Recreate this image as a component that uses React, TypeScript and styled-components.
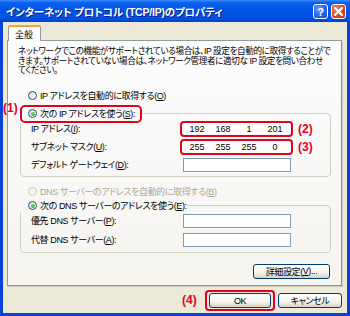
import React from 'react'
import styled, { createGlobalStyle, css } from 'styled-components'

const RED = '#e5001c'

const GlobalStyle = createGlobalStyle`
  html, body {
    margin: 0;
    padding: 0;
    background: #ece9d8;
  }
  body {
    font-family: 'Liberation Sans', 'Noto Sans CJK JP', sans-serif;
    font-size: 9px;
    letter-spacing: -0.4px;
    color: #000;
    font-feature-settings: 'palt';
  }
`

const Window = styled.div`
  width: 350px;
  height: 316px;
  display: flex;
  flex-direction: column;
  overflow: hidden;
`

const TitleBar = styled.div`
  height: 22px;
  flex: none;
  display: flex;
  align-items: center;
  padding: 0 4px 0 6px;
  background: linear-gradient(
    180deg,
    #3d8dff 0%,
    #0b61ee 12%,
    #0055e5 45%,
    #0052e2 80%,
    #003fd4 100%
  );
`

const TitleText = styled.div`
  flex: 1;
  color: #fff;
  font-weight: bold;
  font-size: 10.5px;
  letter-spacing: -0.2px;
  text-shadow: 1px 1px 0 #0a1a8a;
  white-space: nowrap;
`

const CaptionButtons = styled.div`
  display: flex;
  gap: 3px;
  margin-top: 1px;
`

const CaptionButton = styled.div<{ $close?: boolean }>`
  width: 13px;
  height: 13px;
  border: 1px solid #fff;
  border-radius: 3px;
  display: flex;
  align-items: center;
  justify-content: center;
  color: #fff;
  font-weight: bold;
  font-size: 11px;
  background: ${(p) =>
    p.$close
      ? 'radial-gradient(circle at 35% 30%, #f08a66 0%, #dc4a22 55%, #c03512 100%)'
      : 'radial-gradient(circle at 35% 30%, #5d9cff 0%, #2865e8 55%, #1a4ed0 100%)'};
`

const Client = styled.div`
  flex: 1;
  display: flex;
  flex-direction: column;
  background: #ece9d8;
  border: 3px solid #0842d6;
  border-top: 0;
  min-height: 0;
`

const TabStrip = styled.div`
  display: flex;
  padding: 3px 0 0 5px;
  height: 16px;
`

const Tab = styled.div`
  position: relative;
  z-index: 1;
  width: 33px;
  height: 16px;
  box-sizing: border-box;
  border: 1px solid #919b9c;
  border-top: 2px solid #f3a035;
  border-bottom: 0;
  border-radius: 2px 2px 0 0;
  background: #fcfcfe;
  display: flex;
  align-items: center;
  padding-left: 6px;
  letter-spacing: 0;
`

const Panel = styled.div`
  height: 246px;
  box-sizing: border-box;
  margin: -1px 5px 0 4px;
  border: 1px solid #919b9c;
  border-right-color: #8a9192;
  border-bottom-color: #8a9192;
  box-shadow: 1px 1px 0 #d0cebf;
  background: linear-gradient(180deg, #fcfcfe 0%, #f5f4ef 100%);
  display: flex;
  flex-direction: column;
  padding: 6px 10px 0 12px;
`

const Intro = styled.p`
  margin: 0 0 0 -2px;
  line-height: 9.5px;
  font-size: 8.6px;
  white-space: nowrap;
`

const RadioRow = styled.label<{ $disabled?: boolean }>`
  display: flex;
  align-items: center;
  gap: 3px;
  height: 12px;
  white-space: nowrap;
  color: ${(p) => (p.$disabled ? '#aca899' : '#000')};
`

const RadioText = styled.span``

const RadioCircle = styled.span<{ $checked?: boolean; $disabled?: boolean }>`
  width: 9px;
  height: 9px;
  box-sizing: border-box;
  flex: none;
  border-radius: 50%;
  border: 1px solid ${(p) => (p.$disabled ? '#cac8bb' : '#1c5180')};
  background: ${(p) =>
    p.$disabled
      ? '#f4f3ee'
      : 'linear-gradient(135deg, #dcdad5 0%, #ffffff 100%)'};
  display: flex;
  align-items: center;
  justify-content: center;

  ${(p) =>
    p.$checked &&
    css`
      &::after {
        content: '';
        width: 4px;
        height: 4px;
        border-radius: 50%;
        background: radial-gradient(circle at 40% 35%, #5de05d, #21a121);
      }
    `}
`

const Underline = styled.span`
  text-decoration: underline;
`

const Group = styled.fieldset`
  margin: 0;
  padding: 0 0 0 10px;
  border: 1px solid #d0d0bf;
  border-radius: 4px;
  min-width: 0;
`

const Legend = styled.legend<{ $inset?: number }>`
  padding: 0 0 0 ${(p) => p.$inset ?? 0}px;
  margin-left: -11px;
`

const Marked = styled.div`
  position: relative;
  display: inline-flex;
  align-items: center;
  border: 2px solid ${RED};
  border-radius: 5px;
  padding: 1px 5px 1px 6px;
  background: #fcfcfe;
`

const Note = styled.span`
  position: absolute;
  color: ${RED};
  font-weight: bold;
  font-size: 12px;
  line-height: 12px;
  letter-spacing: 0;
  white-space: nowrap;
`

const Rows = styled.div<{ $gap: number }>`
  display: grid;
  grid-template-columns: 152px 108px;
  align-items: center;
  row-gap: ${(p) => p.$gap}px;
`

const Label = styled.span`
  white-space: nowrap;
`

const Field = styled.div<{ $marked?: boolean }>`
  position: relative;
  height: 14px;
  box-sizing: border-box;
  background: #fff;
  border: 1px solid #7f9db9;
  display: grid;
  grid-template-columns: repeat(4, 1fr);
  align-items: center;
  padding: 0 1px;
  letter-spacing: 0;
  ${(p) =>
    p.$marked &&
    css`
      margin: -1px -2px -1px -3px;
      height: 16px;
      border: 2px solid ${RED};
      border-radius: 4px;
      padding: 0 3px 0 2px;
    `}
`

const Octet = styled.span`
  text-align: center;
`

const Button = styled.div<{ $w: number }>`
  width: ${(p) => p.$w}px;
  height: 15px;
  box-sizing: border-box;
  border: 1px solid #003c74;
  border-radius: 3px;
  background: linear-gradient(180deg, #ffffff 0%, #f4f3ee 60%, #d6d0c5 100%);
  display: flex;
  align-items: center;
  justify-content: center;
  white-space: nowrap;
`

const ButtonRow = styled.div`
  display: flex;
  justify-content: flex-end;
`

const Footer = styled.div`
  flex: 1;
  display: flex;
  justify-content: flex-end;
  align-items: center;
  gap: 7px;
  padding: 2px 5px 0 0;
`

const FocusMark = styled.div`
  position: relative;
  border: 2px solid ${RED};
  border-radius: 4px;
  padding: 1px 2px;
  margin: 0 -4px 0 0;
`

const ip = ['192', '168', '1', '201']
const mask = ['255', '255', '255', '0']

function Octets({ values }: { values: string[] }) {
  return (
    <>
      {values.map((v, i) => (
        <Octet key={i}>{v}</Octet>
      ))}
    </>
  )
}

export default function App() {
  return (
    <Window>
      <GlobalStyle />
      <TitleBar>
        <TitleText>インターネット プロトコル (TCP/IP)のプロパティ</TitleText>
        <CaptionButtons>
          <CaptionButton>?</CaptionButton>
          <CaptionButton $close>
            <svg width="9" height="9" viewBox="0 0 9 9">
              <path d="M1 1 L8 8 M8 1 L1 8" stroke="#fff" strokeWidth="2" strokeLinecap="square" />
            </svg>
          </CaptionButton>
        </CaptionButtons>
      </TitleBar>
      <Client>
        <TabStrip>
          <Tab>全般</Tab>
        </TabStrip>
        <Panel>
          <Intro>
            ネットワークでこの機能がサポートされている場合は、IP 設定を自動的に取得することがで
            <br />
            きます。サポートされていない場合は、ネットワーク管理者に適切な IP 設定を問い合わせ
            <br />
            てください。
          </Intro>

          <div style={{ height: 14 }} />
          <RadioRow style={{ paddingLeft: 8 }}>
            <RadioCircle />
            <RadioText>
              IP アドレスを自動的に取得する(<Underline>O</Underline>)
            </RadioText>
          </RadioRow>

          <Group style={{ marginTop: 3 }}>
            <Legend>
              <Marked>
                <Note style={{ left: -19, top: -5 }}>(1)</Note>
                <RadioRow>
                  <RadioCircle $checked />
                  <RadioText>
                    次の IP アドレスを使う(<Underline>S</Underline>):
                  </RadioText>
                </RadioRow>
              </Marked>
            </Legend>
            <Rows $gap={4} style={{ marginTop: -1, paddingBottom: 4 }}>
              <Label>
                IP アドレス(<Underline>I</Underline>):
              </Label>
              <Field $marked>
                <Octets values={ip} />
                <Note style={{ left: 116, top: 0 }}>(2)</Note>
              </Field>
              <Label>
                サブネット マスク(<Underline>U</Underline>):
              </Label>
              <Field $marked>
                <Octets values={mask} />
                <Note style={{ left: 116, top: 0 }}>(3)</Note>
              </Field>
              <Label>
                デフォルト ゲートウェイ(<Underline>D</Underline>):
              </Label>
              <Field />
            </Rows>
          </Group>

          <RadioRow $disabled style={{ paddingLeft: 8, marginTop: 9 }}>
            <RadioCircle $disabled />
            <RadioText>
              DNS サーバーのアドレスを自動的に取得する(<Underline>B</Underline>)
            </RadioText>
          </RadioRow>

          <Group style={{ marginTop: 2 }}>
            <Legend $inset={8}>
              <RadioRow>
                <RadioCircle $checked />
                <RadioText>
                  次の DNS サーバーのアドレスを使う(<Underline>E</Underline>):
                </RadioText>
              </RadioRow>
            </Legend>
            <Rows $gap={5} style={{ marginTop: 2, paddingBottom: 5 }}>
              <Label>
                優先 DNS サーバー(<Underline>P</Underline>):
              </Label>
              <Field />
              <Label>
                代替 DNS サーバー(<Underline>A</Underline>):
              </Label>
              <Field />
            </Rows>
          </Group>

          <ButtonRow style={{ marginTop: 11, marginRight: 1 }}>
            <Button $w={77}>
              詳細設定(<Underline>V</Underline>)...
            </Button>
          </ButtonRow>
        </Panel>
        <Footer>
          <FocusMark>
            <Note style={{ left: -25, top: 2 }}>(4)</Note>
            <Button $w={62}>OK</Button>
          </FocusMark>
          <Button $w={64}>キャンセル</Button>
        </Footer>
      </Client>
    </Window>
  )
}
